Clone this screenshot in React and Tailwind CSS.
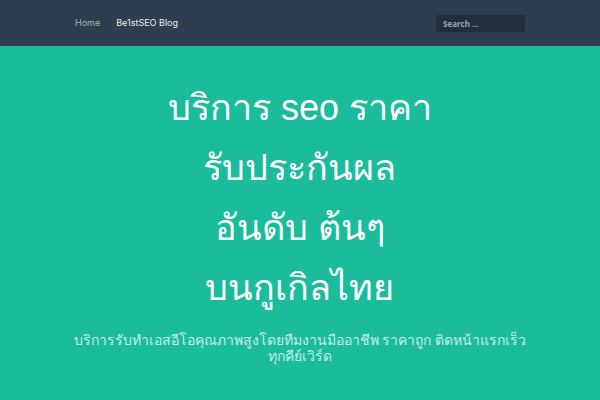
export default function App() {
  return (
    <div className="min-h-screen w-full bg-[#1abc9c] font-['Liberation_Sans',Arial,sans-serif]">
      <header className="h-[46px] bg-[#2c3e50] flex items-center pl-[75px] pr-[75px]">
        <nav className="flex items-center gap-[16px] text-[9px] font-['Inter',sans-serif]">
          <a className="text-[#a9b3bf]">Home</a>
          <a className="text-[#e6ebef]">Be1stSEO Blog</a>
        </nav>
        <input
          type="search"
          placeholder="Search ..."
          className="ml-auto w-[89px] h-[17px] bg-[#212f3d] rounded-[2px] px-[7px] text-[8px] font-bold text-[#9aa5b1] placeholder:text-[#9aa5b1] placeholder:font-bold outline-none font-['Open_Sans',sans-serif]"
        />
      </header>
      <main className="flex flex-col items-center pt-[32px] px-[40px]">
        <h1 className="text-center text-white text-[36px] leading-[60px] font-normal whitespace-nowrap">
          บริการ seo ราคา<br />
          รับประกันผล<br />
          อันดับ ต้นๆ<br />
          บนกูเกิลไทย
        </h1>
        <p className="mt-[14px] text-center text-white/75 text-[14px] leading-[16px] whitespace-nowrap">
          บริการรับทำเอสอีโอคุณภาพสูงโดยทีมงานมืออาชีพ ราคาถูก ติดหน้าแรกเร็ว<br />
          ทุกคีย์เวิร์ด
        </p>
      </main>
    </div>
  );
}
